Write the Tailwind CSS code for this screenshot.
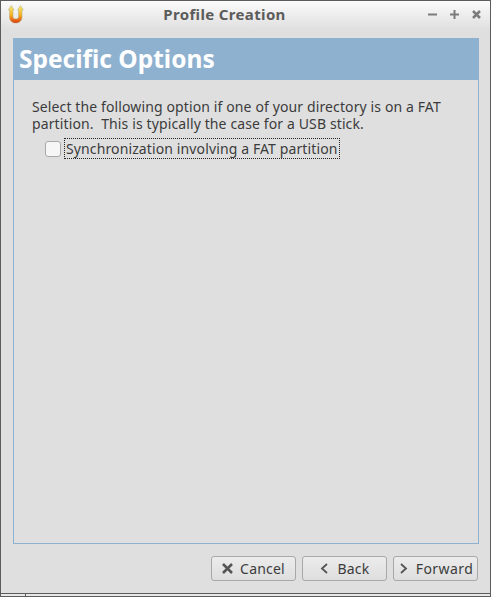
<!DOCTYPE html>
<html lang="en">
<head>
    <meta charset="UTF-8">
    <title>Profile Creation</title>
    <script src="https://cdn.jsdelivr.net/npm/@tailwindcss/browser@4"></script>
</head>
<body class="bg-[#dfdfdf] font-['Noto_Sans',sans-serif] overflow-hidden">
    <div class="w-[491px] h-[597px] flex flex-col border-x border-[#5c5c5c] border-t">

        <!-- Title bar -->
        <div class="h-[29px] shrink-0 flex items-center bg-gradient-to-b from-[#fbfbfb] to-[#dfdfdf] relative">
            <svg class="ml-[6px] mb-[2px] w-[17px] h-[19px]" viewBox="0 0 17 19">
                <defs>
                    <linearGradient id="u" x1="0" y1="0" x2="0" y2="1">
                        <stop offset="0" stop-color="#f8ee78"/>
                        <stop offset="0.55" stop-color="#f5b020"/>
                        <stop offset="1" stop-color="#dc3a10"/>
                    </linearGradient>
                </defs>
                <path d="M4.200 0.500 L7 5 H6 V12 C6 14.500 11.500 14.500 11.500 12 V5 H10.700 L13.500 0.500 L16.300 5 H15 V12 C15 20 2.500 20 2.500 12 V5 H1.400 Z" fill="url(#u)" stroke="#b0a878" stroke-width="0.500"/>
            </svg>
            <div class="absolute left-0 top-[3px] w-[447px] text-center text-[15px] leading-[20px] font-bold text-[#5c5c5c] tracking-[0.35px]">Profile Creation</div>
            <div class="ml-auto mr-[9px] mb-[3px] flex items-center gap-[13px]">
                <svg class="w-[9px] h-[9px]" viewBox="0 0 9 9"><path d="M0 4.500H9" stroke="#7b7b7b" stroke-width="2"/></svg>
                <svg class="w-[9px] h-[9px]" viewBox="0 0 9 9"><path d="M0 4.500H9M4.500 0V9" stroke="#7b7b7b" stroke-width="2"/></svg>
                <svg class="w-[9px] h-[9px]" viewBox="0 0 9 9"><path d="M1 1L8 8M8 1L1 8" stroke="#7b7b7b" stroke-width="2.500"/></svg>
            </div>
        </div>

        <!-- Main panel -->
        <div class="mx-3 mt-2 w-[466px] h-[506px] shrink-0 border border-[#8fb1d0] border-t-0 flex flex-col">
            <div class="h-[42px] bg-[#8fb1d0] flex items-center pl-[6px] -mx-px">
                <h1 class="text-[24.500px] font-bold text-white">Specific Options</h1>
            </div>
            <div class="pl-[18px] pt-[18px] text-[14px] leading-[17px] tracking-[0.12px] text-[#3c3c3c]">
                <p class="whitespace-pre">Select the following option if one of your directory is on a FAT
partition.  This is typically the case for a USB stick.</p>
                <label class="flex items-center mt-[6px] ml-[13px] h-[21px]">
                    <span class="w-[16px] h-[16px] rounded-[3px] border border-[#a8a8a8] bg-[#f6f6f6]"></span>
                    <span class="ml-[3px] border border-dotted border-[#222] px-[1px] h-[21px] leading-[19px] whitespace-nowrap">Synchronization involving a FAT partition</span>
                </label>
            </div>
        </div>

        <!-- Buttons -->
        <div class="flex justify-end gap-[6px] mt-3 mr-3 shrink-0 text-[14px] tracking-[0.2px] text-[#3c3c3c]">
            <button class="w-[85px] h-[25px] rounded-[3px] border border-[#a8a8a8] bg-gradient-to-b from-[#ececec] to-[#dedede] flex items-center justify-center gap-[7px]">
                <svg class="w-[11px] h-[11px]" viewBox="0 0 11 11"><path d="M1 1L10 10M10 1L1 10" stroke="#555" stroke-width="2.600"/></svg>
                Cancel
            </button>
            <button class="w-[85px] h-[25px] rounded-[3px] border border-[#a8a8a8] bg-gradient-to-b from-[#ececec] to-[#dedede] flex items-center justify-center gap-[10px]">
                <svg class="w-[8px] h-[11px]" viewBox="0 0 8 11"><path d="M7 1L2 5.500L7 10" fill="none" stroke="#555" stroke-width="1.800"/></svg>
                Back
            </button>
            <button class="w-[85px] h-[25px] rounded-[3px] border border-[#a8a8a8] bg-gradient-to-b from-[#ececec] to-[#dedede] flex items-center justify-center gap-[8px]">
                <svg class="w-[8px] h-[11px]" viewBox="0 0 8 11"><path d="M1 1L6 5.500L1 10" fill="none" stroke="#555" stroke-width="1.800"/></svg>
                <span class="tracking-[0.45px] -mr-[2px]">Forward</span>
            </button>
        </div>

        <!-- Bottom edge -->
        <div class="mt-auto h-[4px] border-y border-[#5c5c5c] bg-[#e8e8e8] shrink-0 flex">
            <div class="w-[25px] border-r border-[#5c5c5c]"></div>
        </div>
    </div>
</body>
</html>
